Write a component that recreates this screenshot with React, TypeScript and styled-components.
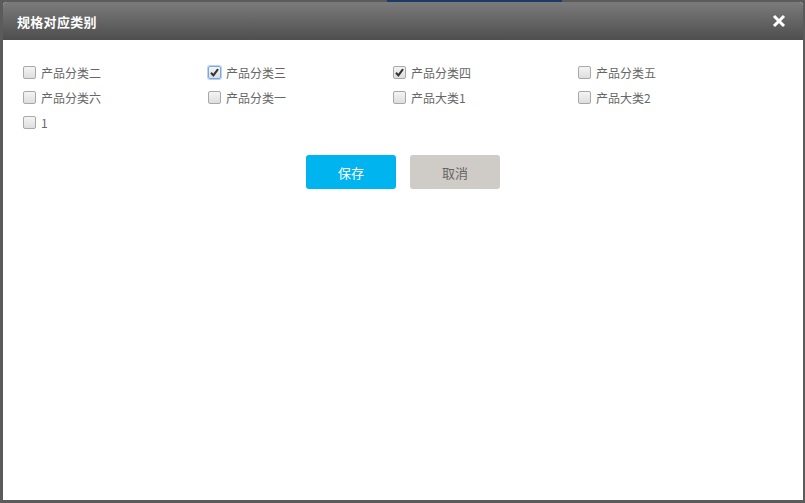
import styled, { createGlobalStyle } from 'styled-components'

const GlobalStyle = createGlobalStyle`
  html, body {
    margin: 0;
    padding: 0;
    background: #5b5b5b;
  }
  body {
    font-family: "Noto Sans CJK SC", "Liberation Sans", sans-serif;
  }
`

const Page = styled.div`
  position: relative;
  width: 805px;
  height: 503px;
  padding: 2px 2px 3px 3px;
  box-sizing: border-box;
  overflow: hidden;
  background: #5b5b5b;
`

const TopBar = styled.div`
  position: absolute;
  top: 0;
  left: 387px;
  width: 175px;
  height: 2px;
  background: #1b3a66;
`

const Dialog = styled.div`
  position: relative;
  height: 100%;
  display: flex;
  flex-direction: column;
  background: #fff;
  border-radius: 4px 4px 0 0;
  overflow: hidden;
`

const Header = styled.div`
  height: 38px;
  flex-shrink: 0;
  display: flex;
  align-items: center;
  justify-content: space-between;
  padding: 0 16px 0 14px;
  background: linear-gradient(to bottom, #7b7b7b, #4e4e4e);
`

const Title = styled.div`
  color: #fff;
  font-size: 13px;
  font-weight: bold;
  letter-spacing: 0.3px;
`

const Close = styled.div`
  width: 16px;
  height: 16px;
  display: flex;
  align-items: center;
  justify-content: center;
  cursor: pointer;
`

const Body = styled.div`
  padding: 20px 20px 0 20px;
`

const Grid = styled.div`
  display: grid;
  grid-template-columns: repeat(4, 185px);
  grid-auto-rows: 25px;
`

const Item = styled.label`
  display: flex;
  align-items: center;
  font-size: 12px;
  color: #666;
`

const Box = styled.span<{ $focus?: boolean }>`
  width: 11px;
  height: 11px;
  margin-right: 5px;
  border: 1px solid ${(p) => (p.$focus ? '#7aa7e6' : '#a8a8a8')};
  border-radius: 2px;
  background: linear-gradient(to bottom, #f4f4f4, #dedede);
  box-shadow: ${(p) => (p.$focus ? '0 0 0 1px #b9d3f7' : 'none')};
  display: flex;
  align-items: center;
  justify-content: center;
`

const Buttons = styled.div`
  display: flex;
  justify-content: center;
  gap: 14px;
  margin-top: 20px;
`

const Button = styled.button<{ $primary?: boolean }>`
  width: 90px;
  height: 34px;
  border: none;
  border-radius: 3px;
  font-family: inherit;
  font-size: 13px;
  cursor: pointer;
  background: ${(p) => (p.$primary ? '#00b5ef' : '#cfcbc7')};
  color: ${(p) => (p.$primary ? '#fff' : '#666')};
`

const Check = () => (
  <svg width="9" height="9" viewBox="0 0 9 9">
    <path d="M1 4.8 L3.4 7.4 L8 1.2" fill="none" stroke="#333" strokeWidth="2" />
  </svg>
)

const items = [
  { label: '产品分类二' },
  { label: '产品分类三', checked: true, focus: true },
  { label: '产品分类四', checked: true },
  { label: '产品分类五' },
  { label: '产品分类六' },
  { label: '产品分类一' },
  { label: '产品大类1' },
  { label: '产品大类2' },
  { label: '1' },
]

const App = () => {
  return (
    <>
      <GlobalStyle />
      <Page>
        <TopBar />
        <Dialog>
          <Header>
            <Title>规格对应类别</Title>
            <Close>
              <svg width="14" height="14" viewBox="0 0 14 14">
                <path d="M2 2 L12 12 M12 2 L2 12" stroke="#fff" strokeWidth="3" />
              </svg>
            </Close>
          </Header>
          <Body>
            <Grid>
              {items.map((item) => (
                <Item key={item.label}>
                  <Box $focus={item.focus}>{item.checked && <Check />}</Box>
                  {item.label}
                </Item>
              ))}
            </Grid>
            <Buttons>
              <Button type='button' $primary>
                保存
              </Button>
              <Button type='button'>取消</Button>
            </Buttons>
          </Body>
        </Dialog>
      </Page>
    </>
  )
}

export default App
